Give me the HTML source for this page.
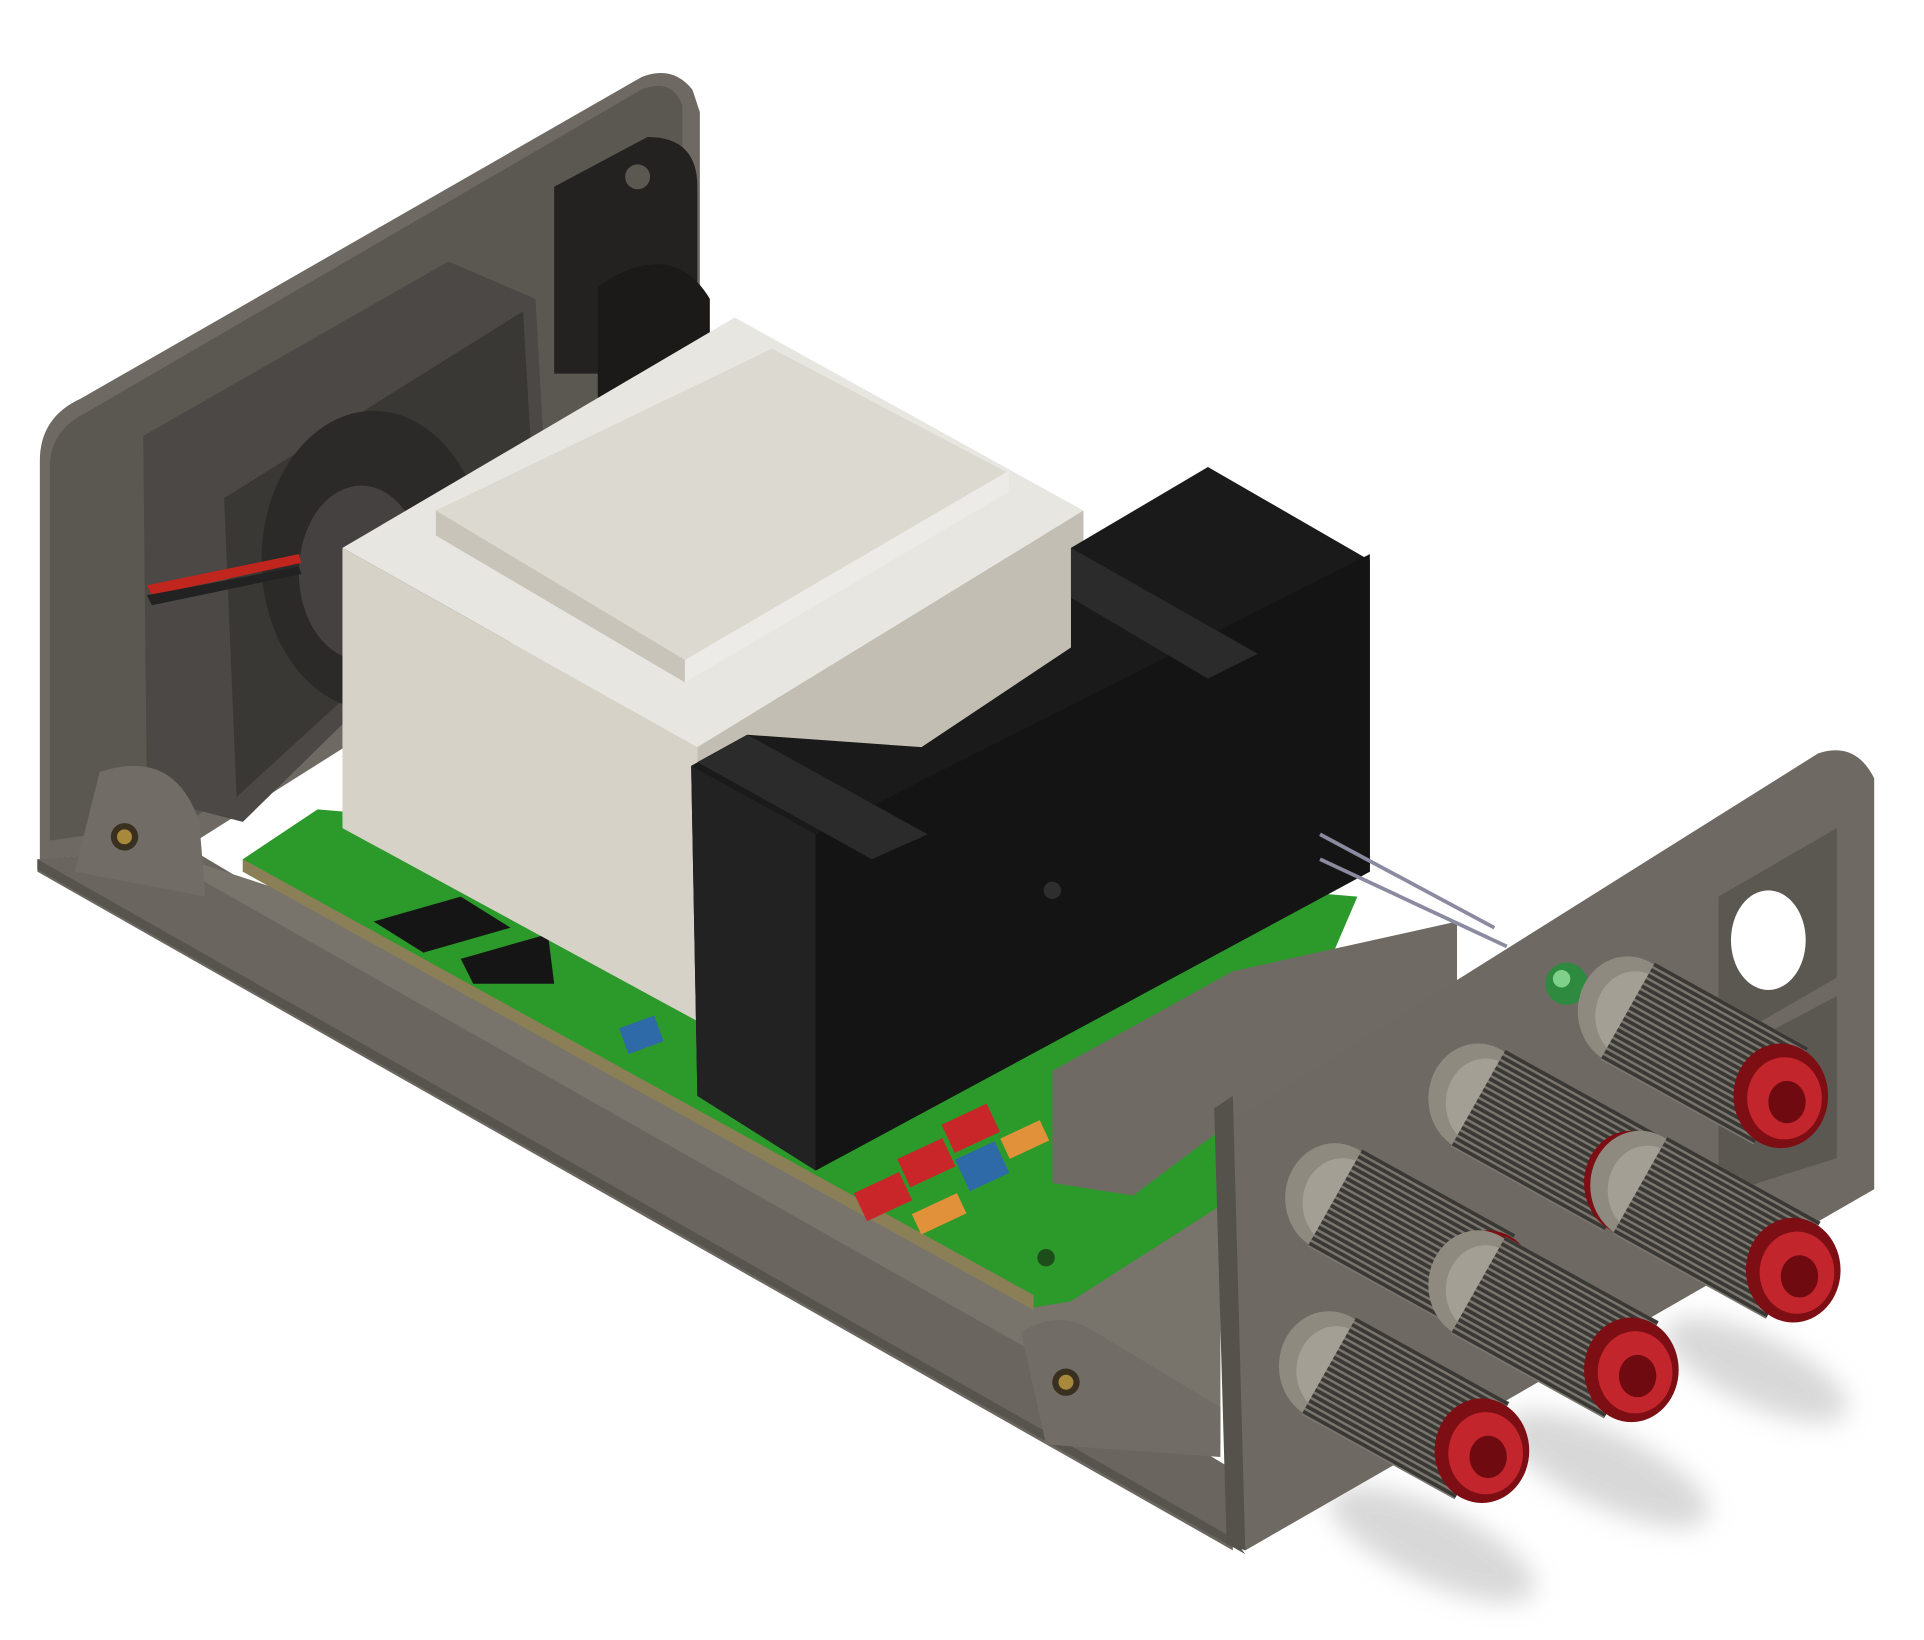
<!DOCTYPE html>
<html><head><meta charset="utf-8"><style>
html,body{margin:0;padding:0;background:#fff;width:1924px;height:1640px;overflow:hidden}
svg{display:block}
</style></head><body>
<svg width="1924" height="1640" viewBox="0 0 1545 1317" preserveAspectRatio="none" xmlns="http://www.w3.org/2000/svg">
<defs>
<filter id="bl"><feGaussianBlur stdDeviation="10"/></filter>
<pattern id="kn" width="5" height="5" patternUnits="userSpaceOnUse" patternTransform="rotate(29)">
<rect width="5" height="5" fill="#3a3835"/><rect width="5" height="2" fill="#7a766e"/></pattern>
</defs>
<!-- shadows -->
<g fill="#cfcfcf" filter="url(#bl)" opacity="0.8">
<ellipse cx="1150" cy="1240" rx="90" ry="30" transform="rotate(25 1150 1240)"/>
<ellipse cx="1290" cy="1180" rx="90" ry="30" transform="rotate(25 1290 1180)"/>
<ellipse cx="1410" cy="1100" rx="80" ry="28" transform="rotate(25 1410 1100)"/>
</g>
<!-- left end panel -->
<path d="M32,370 Q32,335 65,320 L515,62 Q540,52 556,72 L562,90 L562,420 L150,680 L32,690 Z" fill="#6e6a63"/>
<path d="M40,372 Q42,345 68,332 L515,72 Q540,62 548,85 L548,410 L150,660 L40,675 Z" fill="#5b5852"/>
<!-- connector block -->
<path d="M445,150 L520,110 Q560,110 560,150 L560,230 L500,300 L445,300 Z" fill="#232220"/>
<circle cx="512" cy="142" r="10" fill="#5b5852"/>
<path d="M480,230 Q540,190 570,240 L570,300 L480,320 Z" fill="#1b1a19"/>
<!-- fan -->
<path d="M115,350 L360,210 L430,240 L440,420 L195,660 L118,640 Z" fill="#4b4845"/>
<path d="M180,400 L420,250 L430,420 L190,640 Z" fill="#3a3835"/>
<ellipse cx="300" cy="450" rx="90" ry="120" fill="#2c2a28"/>
<ellipse cx="290" cy="460" rx="50" ry="70" fill="#444140"/>
<path d="M118,470 L240,445 L242,452 L122,478 Z" fill="#c0261d"/>
<path d="M118,478 L240,455 L242,461 L122,486 Z" fill="#222"/>
<!-- tray floor -->
<path d="M30,690 L150,680 L990,1180 L990,1245 L30,700 Z" fill="#6a665f"/>
<path d="M30,690 L990,1235 L1000,1248 L30,698 Z" fill="#57534d"/>
<path d="M150,690 L980,960 L980,1160 L820,1080 L150,700 Z" fill="#78746c"/>
<path d="M80,620 Q140,600 160,660 L165,720 L60,700 Z" fill="#716d66"/>
<circle cx="100" cy="672" r="11" fill="#3a3020"/><circle cx="100" cy="672" r="6" fill="#a8893c"/>
<path d="M820,1070 Q850,1050 880,1070 L980,1130 L980,1170 L840,1160 Z" fill="#716d66"/>
<circle cx="856" cy="1110" r="11" fill="#3a3020"/><circle cx="856" cy="1110" r="6" fill="#a8893c"/>
<!-- PCB -->
<path d="M195,690 L255,650 L1090,720 L985,965 L860,1045 L830,1050 L195,700 Z" fill="#2c9a2a"/>
<path d="M195,690 L830,1040 L830,1052 L195,700 Z" fill="#8a7f57"/>
<path d="M300,740 L370,720 L410,745 L340,765 Z" fill="#151515"/>
<path d="M370,770 L440,750 L445,790 L380,790 Z" fill="#151515"/>
<rect x="500" y="820" width="30" height="22" fill="#2f6aa8" transform="rotate(-20 515 831)"/>
<g transform="rotate(-25 760 940)">
<rect x="685" y="925" width="40" height="25" fill="#c9262a"/><rect x="728" y="915" width="40" height="25" fill="#c9262a"/>
<rect x="772" y="905" width="40" height="25" fill="#c9262a"/><rect x="770" y="935" width="35" height="28" fill="#2f6aa8"/>
<rect x="720" y="960" width="40" height="18" fill="#e2913b"/><rect x="810" y="935" width="35" height="18" fill="#e2913b"/>
</g>
<circle cx="840" cy="1010" r="7" fill="#1d4d1b"/>
<!-- transformer -->
<path d="M275,440 L590,255 L870,410 L560,600 Z" fill="#e8e6e1"/>
<path d="M350,410 L620,280 L810,380 L550,545 Z" fill="#dcd9d0"/>
<path d="M350,410 L550,530 L550,548 L350,430 Z" fill="#c8c4ba"/>
<path d="M550,530 L810,378 L810,395 L550,548 Z" fill="#ecebe7"/>
<path d="M275,440 L560,600 L560,820 L275,665 Z" fill="#d6d2c8"/>
<path d="M560,600 L870,410 L870,700 L560,820 Z" fill="#c3beb3"/>
<!-- heatsink -->
<path d="M860,440 L970,375 L1100,450 L1100,700 L655,940 L560,880 L555,615 L600,590 L740,600 L860,520 Z" fill="#1a1a1a"/>
<path d="M555,615 L655,670 L655,940 L560,880 Z" fill="#222"/>
<path d="M655,670 L1100,445 L1100,700 L655,940 Z" fill="#141414"/>
<path d="M600,590 L745,670 L700,690 L560,612 Z" fill="#2b2b2b"/>
<path d="M860,440 L1010,525 L970,545 L860,480 Z" fill="#2b2b2b"/>
<circle cx="845" cy="715" r="7" fill="#2e2e2e"/>
<!-- inner parts near right panel -->
<path d="M845,860 L990,780 L1170,740 L1170,830 L990,900 L910,960 L845,950 Z" fill="#6f6b64"/>
<path d="M1060,690 L1210,760" stroke="#8a8aa0" stroke-width="3"/>
<path d="M1060,670 L1200,745" stroke="#8a8aa0" stroke-width="3"/>
<!-- right end panel -->
<path d="M990,900 L1460,605 Q1490,595 1505,625 L1505,955 L1000,1245 L985,1235 Z" fill="#6e6a63"/>
<path d="M975,890 L990,880 L1000,1245 L985,1240 Z" fill="#55524c"/>
<path d="M1380,720 L1475,665 L1475,785 L1380,840 Z" fill="#5b5852"/>
<ellipse cx="1420" cy="755" rx="30" ry="40" fill="#fff"/>
<path d="M1380,850 L1475,800 L1475,930 L1380,960 Z" fill="#5b5852"/>
<circle cx="1258" cy="790" r="17" fill="#2d8a3f"/><circle cx="1254" cy="786" r="7" fill="#7fd08a"/>
<!-- binding posts (back to front) -->
<defs>
<g id="p1">
<ellipse cx="1072" cy="962" rx="40" ry="44" fill="#8f8a80"/>
<ellipse cx="1078" cy="966" rx="32" ry="36" fill="#a49f95"/>
<path d="M1050,1001 L1173,1069 L1217,991 L1094,923 Z" fill="url(#kn)"/>
<ellipse cx="1195" cy="1030" rx="38" ry="42" fill="#7c0e14"/>
<ellipse cx="1198" cy="1032" rx="30" ry="33" fill="#c2252c"/>
<ellipse cx="1200" cy="1035" rx="15" ry="17" fill="#6e0a10"/>
</g>
</defs>
<use href="#p1" transform="translate(235,-150)"/>
<use href="#p1" transform="translate(115,-80)"/>
<use href="#p1" transform="translate(245,-10)"/>
<use href="#p1" transform="translate(0,0)"/>
<use href="#p1" transform="translate(115,70)"/>
<use href="#p1" transform="translate(-5,135)"/>
</svg>
</body></html>
